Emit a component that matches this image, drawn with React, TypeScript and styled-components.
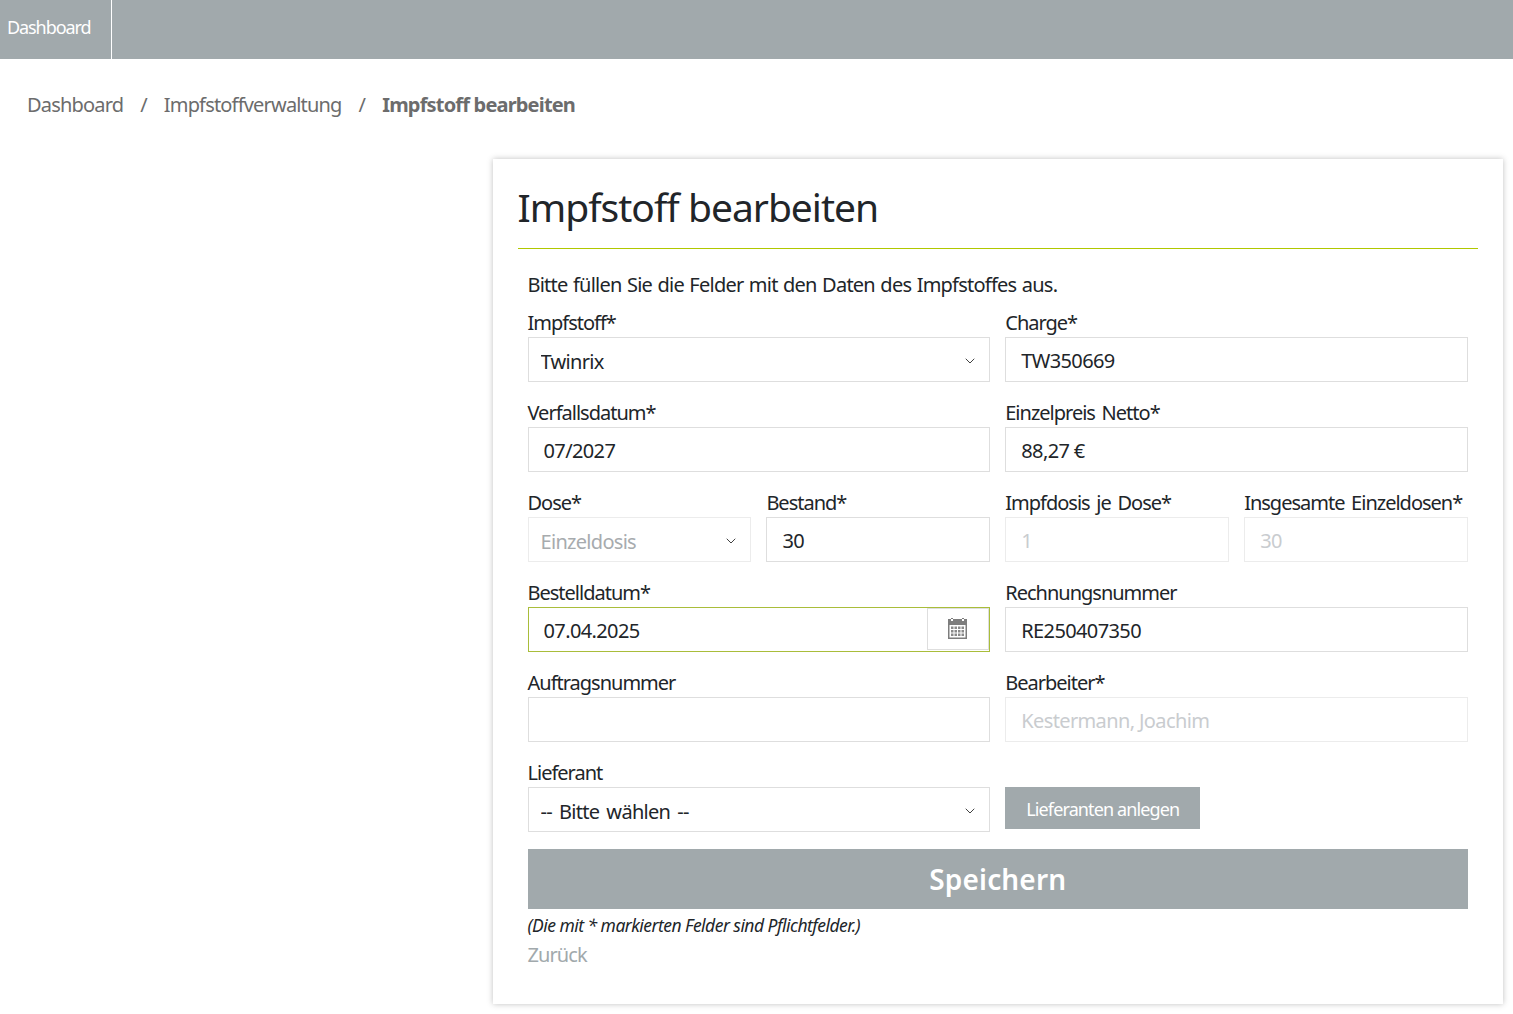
import React from "react";
import styled, { createGlobalStyle } from "styled-components";
import { ChevronDown } from "lucide-react";

const GlobalStyle = createGlobalStyle`
  html, body {
    margin: 0;
    padding: 0;
    background: #fff;
    font-family: "Noto Sans", "Open Sans", sans-serif;
    color: #212529;
  }
  * { box-sizing: border-box; }
`;

const TopBar = styled.nav`
  height: 59px;
  background: #a1a9ac;
  display: flex;
`;

const TopLink = styled.a`
  width: 112px;
  padding-left: 7px;
  border-right: 1px solid #fff;
  color: #fff;
  font-size: 18px;
  letter-spacing: -1.08px;
  line-height: 55px;
`;

const Crumbs = styled.ol`
  list-style: none;
  margin: 0;
  padding: 32px 0 0 27px;
  height: 100px;
  display: flex;
  font-size: 20px;
  letter-spacing: -0.82px;
  line-height: 28px;
  color: #6c6c6c;
`;

const Crumb = styled.li<{ $active?: boolean }>`
  font-weight: ${(p) => (p.$active ? 700 : 400)};
  &:not(:last-child)::after {
    content: "/";
    font-weight: 400;
    padding: 0 17px;
  }
`;

const Page = styled.main`
  display: flex;
  justify-content: flex-end;
  padding: 0 10px 10px 0;
`;

const Card = styled.section`
  width: 1010.5px;
  height: 845px;
  padding: 22px 25px 0;
  background: #fff;
  box-shadow: 0 0 6px rgba(0, 0, 0, 0.25);
`;

const Title = styled.h1`
  margin: 0;
  height: 68px;
  border-bottom: 1px solid #b1c800;
  font-size: 39px;
  font-weight: 400;
  letter-spacing: -1px;
  line-height: 52px;
  color: #212529;
`;

const Form = styled.form`
  padding: 22px 10px 0;
`;

const Intro = styled.p`
  margin: 0;
  height: 38px;
  font-size: 20px;
  letter-spacing: -0.77px;
  word-spacing: 1px;
  line-height: 28px;
`;

const Grid = styled.div`
  display: grid;
  grid-template-columns: repeat(4, 1fr);
  column-gap: 15px;
`;

const Field = styled.div<{ $span?: number }>`
  grid-column: span ${(p) => p.$span ?? 2};
  height: 90px;
  position: relative;
`;

const Label = styled.label`
  display: block;
  height: 28px;
  font-size: 20px;
  letter-spacing: -1px;
  word-spacing: 2.5px;
  line-height: 28px;
  white-space: nowrap;
`;

const Input = styled.input<{ $focus?: boolean }>`
  display: block;
  width: 100%;
  height: 45px;
  padding: 1px 15px 0;
  border: 1px solid ${(p) => (p.$focus ? "#a9bd3a" : "#dedede")};
  border-radius: 0;
  outline: none;
  background: #fff;
  color: #212529;
  font-family: inherit;
  font-size: 20px;
  letter-spacing: -0.62px;
  &:disabled {
    border-color: #ececec;
    color: #c9cccf;
    -webkit-text-fill-color: #c9cccf;
    opacity: 1;
  }
`;

const SelectBox = styled.div`
  position: relative;
  color: #333;
`;

const Select = styled.select`
  display: block;
  width: 100%;
  height: 45px;
  padding: 4px 12px 0;
  appearance: none;
  border: 1px solid #dedede;
  border-radius: 0;
  outline: none;
  background: #fff;
  color: #212529;
  font-family: inherit;
  font-size: 20px;
  letter-spacing: -0.7px;
  word-spacing: 2.5px;
  &:disabled {
    border-color: #ececec;
    color: #a7abae;
    opacity: 1;
  }
`;

const Chevron = styled(ChevronDown)`
  position: absolute;
  top: 16px;
  right: 12px;
  width: 16px;
  height: 16px;
  stroke-width: 1.4;
  pointer-events: none;
`;

const DateButton = styled.button`
  position: absolute;
  top: 29px;
  right: 1px;
  width: 62px;
  height: 42px;
  padding: 0 2px 2px 0;
  border: 1px solid #dedede;
  background: #fff;
  display: flex;
  align-items: center;
  justify-content: center;
`;

const SmallButton = styled.button`
  display: block;
  width: 195px;
  height: 42px;
  margin-top: 28px;
  padding: 2px 0 0;
  border: 0;
  background: #a1a9ac;
  color: #fff;
  font-family: inherit;
  font-size: 18px;
  letter-spacing: -0.88px;
`;

const SaveButton = styled.button`
  display: block;
  width: 100%;
  height: 60px;
  border: 0;
  background: #a1a9ac;
  color: #fff;
  font-family: inherit;
  font-size: 28px;
  font-weight: 600;
  letter-spacing: 0.15px;
`;

const Hint = styled.p`
  margin: 5px 0 0;
  font-size: 17.5px;
  font-style: italic;
  letter-spacing: -0.53px;
  line-height: 23px;
`;

const Back = styled.a`
  display: block;
  margin-top: 4px;
  font-size: 20px;
  letter-spacing: -0.9px;
  line-height: 28px;
  color: #a1a9ac;
`;

const CalendarIcon = () => (
  <svg width="19" height="21" viewBox="0 0 19 21" aria-hidden="true">
    <path fill="#7d7d7d" d="M0 1h3V0h2v1h9V0h2v1h3v20H0z" />
    <path fill="#fff" d="M3 1h2v2H3zM14 1h2v2h-2z" />
    <rect x="1.5" y="7" width="16" height="12.5" fill="#fff" />
    {[8.5, 12, 15.5].map((y) =>
      [3, 6.5, 10, 13.5].map((x) => (
        <rect key={`${x}-${y}`} x={x} y={y} width="2.5" height="2.5" fill="#8a8a8a" />
      ))
    )}
  </svg>
);

const App = () => {
  return (
    <>
      <GlobalStyle />
      <TopBar>
        <TopLink>Dashboard</TopLink>
      </TopBar>
      <Crumbs>
        <Crumb>Dashboard</Crumb>
        <Crumb>Impfstoffverwaltung</Crumb>
        <Crumb $active>Impfstoff bearbeiten</Crumb>
      </Crumbs>
      <Page>
        <Card>
          <Title>Impfstoff bearbeiten</Title>
          <Form onSubmit={(e) => e.preventDefault()}>
            <Intro>Bitte füllen Sie die Felder mit den Daten des Impfstoffes aus.</Intro>
            <Grid>
              <Field>
                <Label>Impfstoff*</Label>
                <SelectBox>
                  <Select defaultValue="Twinrix">
                    <option>Twinrix</option>
                  </Select>
                  <Chevron />
                </SelectBox>
              </Field>
              <Field>
                <Label>Charge*</Label>
                <Input defaultValue="TW350669" />
              </Field>
              <Field>
                <Label>Verfallsdatum*</Label>
                <Input defaultValue="07/2027" />
              </Field>
              <Field>
                <Label>Einzelpreis Netto*</Label>
                <Input defaultValue="88,27 €" />
              </Field>
              <Field $span={1}>
                <Label>Dose*</Label>
                <SelectBox>
                  <Select disabled defaultValue="Einzeldosis">
                    <option>Einzeldosis</option>
                  </Select>
                  <Chevron />
                </SelectBox>
              </Field>
              <Field $span={1}>
                <Label>Bestand*</Label>
                <Input defaultValue="30" />
              </Field>
              <Field $span={1}>
                <Label>Impfdosis je Dose*</Label>
                <Input disabled defaultValue="1" />
              </Field>
              <Field $span={1}>
                <Label>Insgesamte Einzeldosen*</Label>
                <Input disabled defaultValue="30" />
              </Field>
              <Field>
                <Label>Bestelldatum*</Label>
                <Input $focus defaultValue="07.04.2025" />
                <DateButton type="button">
                  <CalendarIcon />
                </DateButton>
              </Field>
              <Field>
                <Label>Rechnungsnummer</Label>
                <Input defaultValue="RE250407350" />
              </Field>
              <Field>
                <Label>Auftragsnummer</Label>
                <Input />
              </Field>
              <Field>
                <Label>Bearbeiter*</Label>
                <Input disabled defaultValue="Kestermann, Joachim" />
              </Field>
              <Field>
                <Label>Lieferant</Label>
                <SelectBox>
                  <Select defaultValue="">
                    <option value="">-- Bitte wählen --</option>
                  </Select>
                  <Chevron />
                </SelectBox>
              </Field>
              <Field>
                <SmallButton type="button">Lieferanten anlegen</SmallButton>
              </Field>
            </Grid>
            <SaveButton type="submit">Speichern</SaveButton>
            <Hint>(Die mit * markierten Felder sind Pflichtfelder.)</Hint>
            <Back>Zurück</Back>
          </Form>
        </Card>
      </Page>
    </>
  );
};

export default App;
